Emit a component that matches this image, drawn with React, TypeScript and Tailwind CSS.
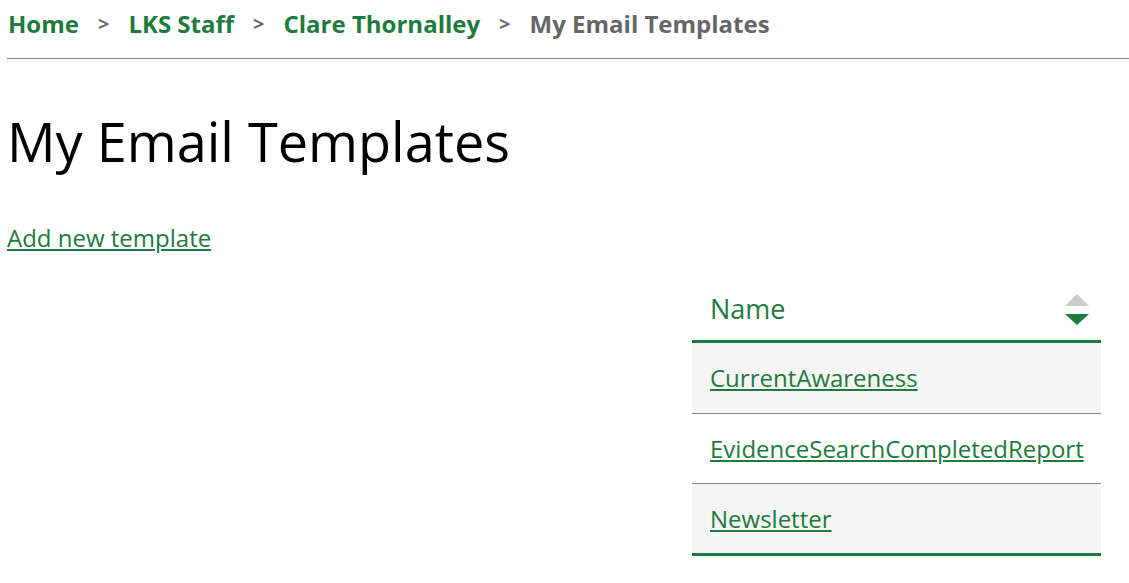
const green = "text-[#1e7a3d]";

const crumbs = ["Home", "LKS Staff", "Clare Thornalley"];
const templates = ["CurrentAwareness", "EvidenceSearchCompletedReport", "Newsletter"];

const SortIcon = () => (
  <svg width="24" height="32" viewBox="0 0 24 32" className="block">
    <polygon points="12,0 24,12 0,12" fill="#cccccc" />
    <polygon points="0,20 24,20 12,31" fill="#1e7a3d" />
  </svg>
);

const rowHeights = ["h-[71px]", "h-[70px]", "h-[72px]"];

export default function App() {
  return (
    <div className="min-h-screen bg-white pl-[7px] font-['Open_Sans',sans-serif]">
      <nav className="flex h-[59px] items-start border-b border-[#888] pl-[1px] pt-[8px] text-[24px] font-bold leading-[32px]">
        {crumbs.map((c) => (
          <span key={c} className="flex items-center">
            <a href="#" className={green}>
              {c}
            </a>
            <span className="mx-[19px] text-[20px] text-[#666]">&gt;</span>
          </span>
        ))}
        <span className="text-[#666]">My Email Templates</span>
      </nav>

      <h1 className="mt-[46px] text-[54px] font-normal leading-[72px] text-black">My Email Templates</h1>

      <a href="#" className={`mt-[45px] inline-block text-[24px] leading-[32px] underline ${green}`}>
        Add new template
      </a>

      <div className="ml-auto mr-[28px] mt-[29px] w-[409px]">
        <div
          className={`flex h-[60px] items-center justify-between border-b-[3px] border-[#1e7a3d] pb-[4px] pl-[18px] pr-[12px] text-[27px] ${green}`}
        >
          <span>Name</span>
          <SortIcon />
        </div>
        {templates.map((t, i) => (
          <div
            key={t}
            className={`flex items-center px-[18px] text-[24px] ${rowHeights[i]} ${
              i % 2 === 0 ? "bg-[#f5f5f5]" : "bg-white"
            } ${i === templates.length - 1 ? "border-b-[3px] border-[#1e7a3d]" : "border-b border-[#888]"}`}
          >
            <a href="#" className={`underline ${green}`}>
              {t}
            </a>
          </div>
        ))}
      </div>
    </div>
  );
}
